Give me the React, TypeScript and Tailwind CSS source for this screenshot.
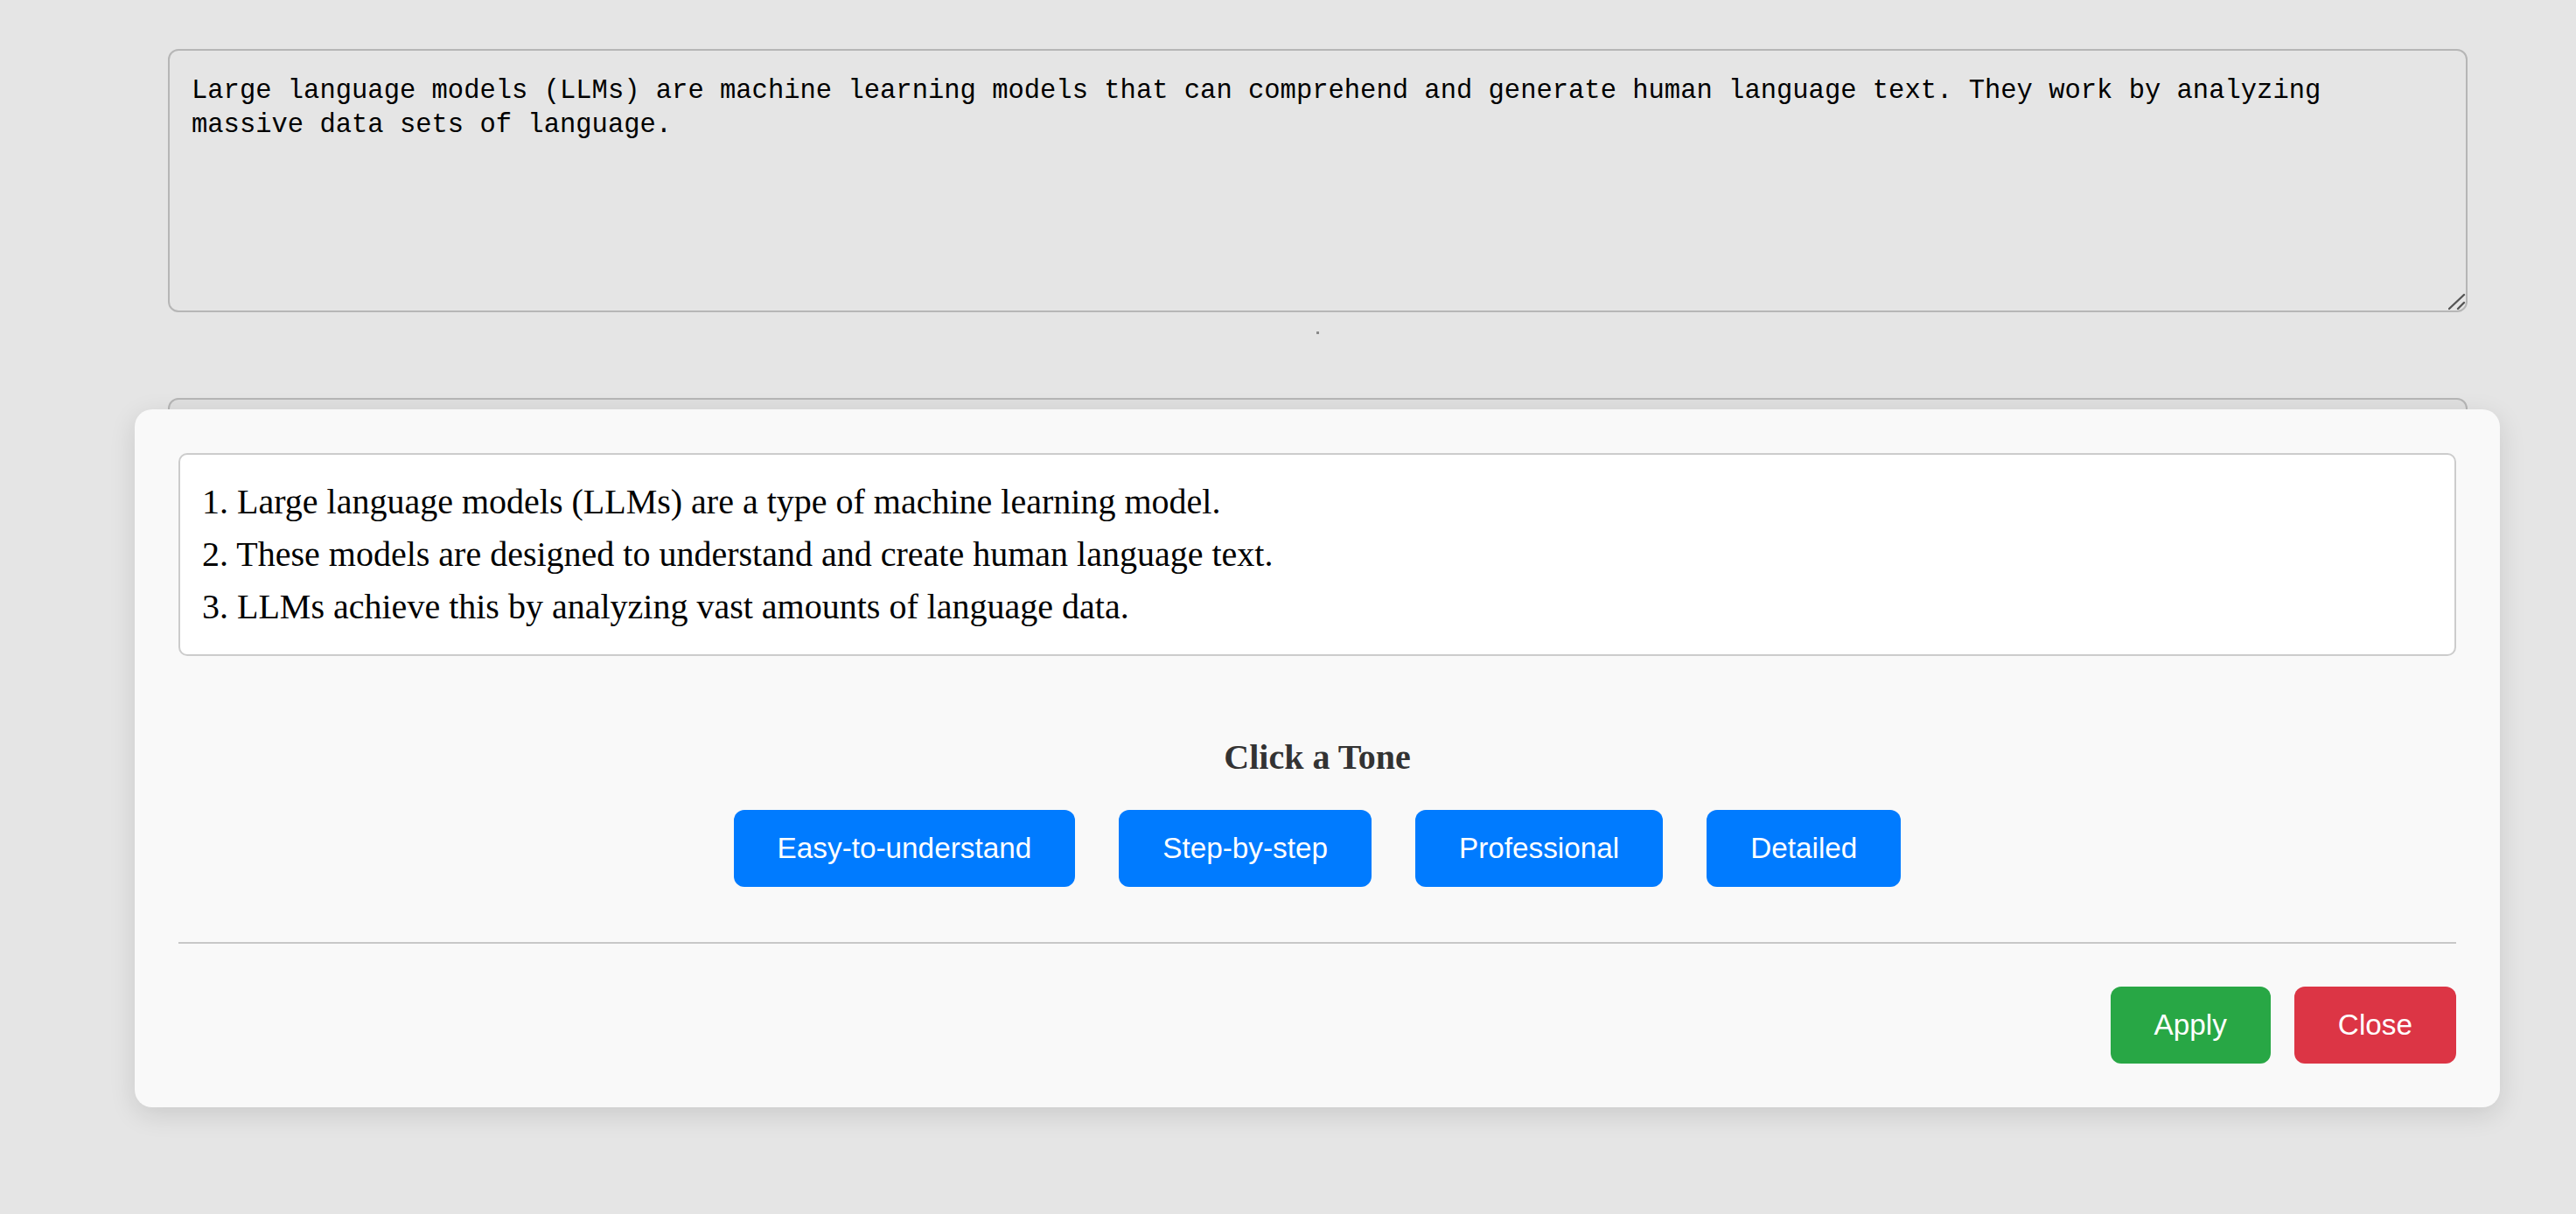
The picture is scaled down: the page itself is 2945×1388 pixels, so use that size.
import React from 'react'

const tones = ['Easy-to-understand', 'Step-by-step', 'Professional', 'Detailed']

const summary = [
  '1. Large language models (LLMs) are a type of machine learning model.',
  '2. These models are designed to understand and create human language text.',
  '3. LLMs achieve this by analyzing vast amounts of language data.',
]

function ResizeHandle() {
  return (
    <svg
      className="absolute right-0 bottom-0"
      width="20"
      height="20"
      viewBox="0 0 20 20"
      fill="none"
    >
      <path d="M1 18L18 2" stroke="#555" strokeWidth="2.4" strokeLinecap="round" />
      <path d="M11 18L18 11" stroke="#555" strokeWidth="2.4" strokeLinecap="round" />
    </svg>
  )
}

export default function App() {
  return (
    <div className="relative min-h-screen bg-[#e5e5e5] overflow-hidden">
      <div className="ml-[192px] w-[2629px] pt-[56px]">
        <div className="relative h-[301px] rounded-[12px] border-2 border-[#b6b6b6] bg-[#e5e5e5] px-[25px] pt-[27px] font-['Liberation_Mono',monospace] text-[30.5px] leading-[39px] text-black">
          Large language models (LLMs) are machine learning models that can comprehend and generate human language text. They work by analyzing
          <br />
          massive data sets of language.
          <ResizeHandle />
        </div>

        <div className="mt-[22px] flex justify-center">
          <div className="h-[3px] w-[3px] bg-[#8a8a8a]" />
        </div>

        <div className="mt-[73px] h-[301px] rounded-[12px] border-2 border-[#b6b6b6] bg-[#e0e0e0]" />
      </div>

      {/* tone modal */}
      <div className="absolute left-[154px] top-[468px] w-[2704px] rounded-[20px] bg-[#f9f9f9] p-[50px] shadow-[0_8px_30px_rgba(0,0,0,0.12)]">
        <div className="rounded-[10px] border-2 border-[#cccccc] bg-white px-[25px] py-[24px] font-['Liberation_Serif',serif] text-[40px] leading-[60px] text-black">
          {summary.map((line) => (
            <div key={line}>{line}</div>
          ))}
        </div>

        <h3 className="mt-[93px] text-center font-['Liberation_Serif',serif] text-[40px] font-bold leading-[46px] text-[#333333]">
          Click a Tone
        </h3>

        <div className="mt-[37px] flex justify-center gap-[50px]">
          {tones.map((tone) => (
            <button
              key={tone}
              className="rounded-[12px] bg-[#007bff] px-[50px] py-[25px] font-['Liberation_Sans',Arial,sans-serif] text-[33.3px] leading-[38px] text-white"
            >
              {tone}
            </button>
          ))}
        </div>

        <div className="mt-[63px] h-[2px] bg-[#c8c8c8]" />

        <div className="mt-[49px] flex justify-end gap-[27px]">
          <button className="rounded-[12px] bg-[#28a745] px-[50px] py-[25px] font-['Liberation_Sans',Arial,sans-serif] text-[33.3px] leading-[38px] text-white">
            Apply
          </button>
          <button className="rounded-[12px] bg-[#dc3545] px-[50px] py-[25px] font-['Liberation_Sans',Arial,sans-serif] text-[33.3px] leading-[38px] text-white">
            Close
          </button>
        </div>
      </div>
    </div>
  )
}
